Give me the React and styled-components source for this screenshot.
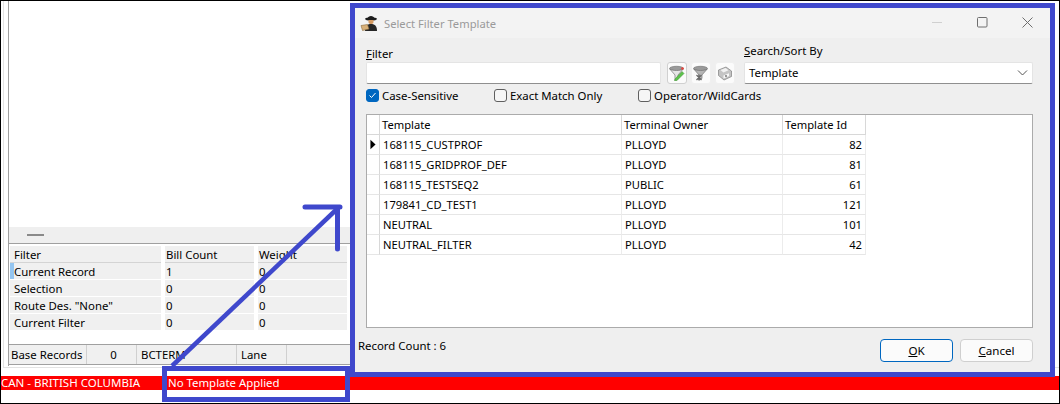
import React from "react";
import styled, { createGlobalStyle } from "styled-components";

const GlobalStyle = createGlobalStyle`
  html, body { margin: 0; padding: 0; background: #fff; }
  body { font-family: "Noto Sans", "Open Sans", sans-serif; font-size: 11.4px; color: #000; }
`;

const Shell = styled.div`
  position: relative;
  width: 1060px;
  height: 404px;
  box-sizing: border-box;
  border: 1px solid #000;
  overflow: hidden;
  background: #fff;
  display: flex;
  flex-direction: column;
`;

const OuterFrame = styled.div`
  margin-left: 2px;
  height: 367px;
  box-sizing: border-box;
  border-left: 1px solid #e3e3e3;
  border-bottom: 1px solid #e3e3e3;
  padding-left: 4px;
`;

const LeftPane = styled.div`
  width: 342px;
  height: 365px;
  border-left: 1px solid #a0a0a0;
  box-sizing: border-box;
  display: flex;
  flex-direction: column;
`;

const ChartArea = styled.div`
  height: 226px;
`;

const Sizer = styled.div`
  height: 17px;
  background: #efefef;
  border-bottom: 1px solid #a0a0a0;
  display: flex;
  align-items: center;
  box-sizing: border-box;
  padding-left: 18px;
  &::before {
    content: "";
    width: 17px;
    height: 2px;
    background: #8a8a8a;
  }
`;

const SummaryGrid = styled.div`
  margin: 2px 0 0 1px;
  display: grid;
  grid-template-columns: 151px 89px 89px;
  column-gap: 4px;
  grid-auto-rows: 17px;
`;

const SummaryCell = styled.div`
  background: #f0f0f0;
  border-bottom: 1px solid ${(p) => (p.$head ? "#d4d4d4" : "#fff")};
  box-sizing: border-box;
  padding-left: ${(p) => (p.$first ? "4px" : "1px")};
  line-height: 17px;
  white-space: nowrap;
  position: relative;
  ${(p) => p.$marked && `box-shadow: inset 4px 0 0 #94c5f0;`}
`;

const StatusBar = styled.div`
  margin-top: 13px;
  height: 21px;
  box-sizing: border-box;
  border-top: 1px solid #a0a0a0;
  border-bottom: 1px solid #a0a0a0;
  background: #f0f0f0;
  display: flex;
`;

const StatusCell = styled.div`
  width: ${(p) => p.$w}px;
  box-sizing: border-box;
  border-right: 1px solid #d0d0d0;
  padding-left: ${(p) => (p.$first ? "2px" : "4px")};
  line-height: 20px;
  text-align: ${(p) => (p.$center ? "center" : "left")};
`;

const RedStrip = styled.div`
  margin-top: 8px;
  height: 14px;
  background: #ff0000;
  color: #fff;
  line-height: 14px;
  display: flex;
  font-size: 11.5px;
`;

const Province = styled.span`
  width: 167px;
`;

const Dialog = styled.div`
  position: absolute;
  left: 349px;
  top: 2px;
  width: 705px;
  height: 374px;
  box-sizing: border-box;
  border: 5px solid #3f48cc;
  background: #efefef;
  display: flex;
  flex-direction: column;
`;

const TitleBar = styled.div`
  height: 30px;
  flex: none;
  background: #f3f3f3;
  display: flex;
  align-items: center;
  padding-left: 5px;
  color: #9a9a9a;
  font-size: 11.2px;
  gap: 5px;
`;

const WindowButtons = styled.div`
  margin-left: auto;
  display: flex;
  align-items: center;
  gap: 34px;
  padding: 0 17px 2px 0;
`;

const FilterRow = styled.div`
  display: flex;
  margin: 5px 0 0 11px;
  height: 42px;
`;

const Field = styled.div`
  display: flex;
  flex-direction: column;
  width: ${(p) => p.$w}px;
  padding-top: ${(p) => p.$top || 0}px;
`;

const FieldLabel = styled.label`
  line-height: 16px;
  height: 16px;
`;

const TextBox = styled.div`
  height: 22px;
  margin-top: ${(p) => p.$gap || 0}px;
  box-sizing: border-box;
  background: #fff;
  border: 1px solid #e4e4e4;
  border-bottom: 1px solid #8f8f8f;
  border-radius: 2px;
  padding-left: 4px;
  line-height: 20px;
  display: flex;
  align-items: center;
  justify-content: space-between;
`;

const Chevron = styled.svg`
  margin-right: 4px;
`;

const ToolGroup = styled.div`
  display: flex;
  gap: 4px;
  margin: 19px 0 0 6px;
  width: 77px;
`;

const ToolButton = styled.div`
  width: 20px;
  height: 22px;
  border-radius: 3px;
  box-sizing: border-box;
  border: 1px solid ${(p) => (p.$active ? "#d0d0d0" : "#f0f0f0")};
  background: #fbfbfb;
  display: flex;
  align-items: center;
  justify-content: center;
`;

const CheckRow = styled.div`
  display: flex;
  height: 20px;
  margin-left: 11px;
  align-items: center;
`;

const CheckItem = styled.div`
  width: ${(p) => p.$w}px;
  display: flex;
  align-items: center;
  gap: 3px;
`;

const Box = styled.span`
  width: 13px;
  height: 13px;
  box-sizing: border-box;
  border-radius: 3px;
  border: 1px solid ${(p) => (p.$on ? "#0067c0" : "#5f5f5f")};
  background: ${(p) => (p.$on ? "#0067c0" : "#f6f6f6")};
  display: flex;
  align-items: center;
  justify-content: center;
`;

const TableFrame = styled.div`
  margin: 9px 0 0 11px;
  width: 667px;
  height: 214px;
  box-sizing: border-box;
  background: #fff;
  border: 1px solid #ababab;
`;

const TableGrid = styled.div`
  display: grid;
  grid-template-columns: 13px 242px 161px 83px;
  width: max-content;
  grid-auto-rows: 20px;
  font-size: 11.2px;
`;

const TableCell = styled.div`
  box-sizing: border-box;
  border-bottom: 1px solid #e6e6e6;
  border-right: 1px solid ${(p) => (p.$head || p.$gutter ? "#d8d8d8" : "#ececec")};
  padding: 0 3px;
  line-height: 20px;
  text-align: ${(p) => (p.$num ? "right" : "left")};
  white-space: nowrap;
  ${(p) => p.$head && `border-bottom-color: #d8d8d8; padding-left: 2px;`}
  display: ${(p) => (p.$gutter ? "flex" : "block")};
  align-items: center;
`;

const Footer = styled.div`
  flex: 1;
  display: flex;
  align-items: flex-start;
  justify-content: space-between;
  padding: 8px 17px 0 3px;
`;

const RecordCount = styled.span`
  margin-top: 2px;
`;

const ButtonRow = styled.div`
  display: flex;
  gap: 7px;
  margin-top: 3px;
`;

const DialogButton = styled.button`
  width: 73px;
  height: 23px;
  box-sizing: border-box;
  font: inherit;
  font-size: 11.6px;
  color: #000;
  border-radius: 4px;
  padding: 0;
  background: #fbfbfb;
  border: 1px solid ${(p) => (p.$primary ? "#0067c0" : "#cfcfcf")};
`;

const Highlight = styled.div`
  position: absolute;
  left: 161px;
  top: 365px;
  width: 188px;
  height: 36px;
  box-sizing: border-box;
  border: 5px solid #3f48cc;
`;

const Arrow = styled.svg`
  position: absolute;
  left: 0;
  top: 0;
  pointer-events: none;
`;

const Template = styled.span`
  position: absolute;
  left: 167px;
  top: 375px;
  width: 176px;
  height: 14px;
  line-height: 14px;
  color: #fff;
  background: #ff0000;
`;

const rows = [
  ["168115_CUSTPROF", "PLLOYD", 82],
  ["168115_GRIDPROF_DEF", "PLLOYD", 81],
  ["168115_TESTSEQ2", "PUBLIC", 61],
  ["179841_CD_TEST1", "PLLOYD", 121],
  ["NEUTRAL", "PLLOYD", 101],
  ["NEUTRAL_FILTER", "PLLOYD", 42],
];

const summary = [
  ["Current Record", "1", "0"],
  ["Selection", "0", "0"],
  ['Route Des. "None"', "0", "0"],
  ["Current Filter", "0", "0"],
];

const Funnel = ({ grey }) => (
  <svg width="16" height="16" viewBox="0 0 16 16">
    <ellipse cx="7.5" cy="3.5" rx="7" ry="2.2" fill="#9a9a9a" stroke="#777" strokeWidth="0.7" />
    <path d="M0.8 4 L6 10 V15 L9 13.5 V10 L14.2 4 C11 6 4 6 0.8 4Z" fill={grey ? "#b5b5b5" : "#e6e6e6"} stroke="#777" strokeWidth="0.7" />
    {grey ? (
      <path d="M3.5 10l5 5M8.5 10l-5 5M6 9.5v6" stroke="#6a6a6a" strokeWidth="1.3" />
    ) : (
      <>
        <path d="M6 14 L13 6.5 L15 8.5 L8 15.5 L5.5 15.8Z" fill="#5cc24a" stroke="#3d8a30" strokeWidth="0.5" />
        <circle cx="13.5" cy="3.5" r="1.3" fill="#e8433a" />
      </>
    )}
  </svg>
);

const Floppy = () => (
  <svg width="16" height="16" viewBox="0 0 16 16">
    <path d="M1.5 5 L9 2 L14.5 6 V11.5 L7 15 L1.5 10.5Z" fill="#c4c4c4" stroke="#808080" strokeWidth="0.7" />
    <path d="M3.5 5 L8.5 3 L11.5 5.2 L6.5 7.5Z" fill="#f2f2f2" />
    <path d="M6.5 10.5 L12 8.3 V11 L6.5 13.4Z" fill="#f7f7f7" />
    <circle cx="9" cy="11" r="0.8" fill="#222" />
  </svg>
);

const AgentIcon = () => (
  <svg width="19" height="18" viewBox="0 0 19 18">
    <ellipse cx="11" cy="5" rx="6" ry="1.6" fill="#1c1c1c" />
    <path d="M7.5 4.5 C8 1 14 1 14.5 4.5Z" fill="#1c1c1c" />
    <path d="M8.5 6 h5 v2.5 c-1 2 -4 2 -5 0Z" fill="#d49a62" />
    <path d="M5 17 C5 11 8 10 11 10 C14 10 17 11 17 17Z" fill="#262626" />
    <path d="M1 11.5 L7.5 10.5 L9 15 L2.5 16.5Z" fill="#d8b078" stroke="#8a6a3c" strokeWidth="0.6" />
  </svg>
);

const App = () => (
  <>
    <GlobalStyle />
    <Shell>
      <OuterFrame>
        <LeftPane>
          <ChartArea />
          <Sizer />
          <SummaryGrid>
            <SummaryCell $head $first>Filter</SummaryCell>
            <SummaryCell $head>Bill Count</SummaryCell>
            <SummaryCell $head>Weight</SummaryCell>
            {summary.map((row, i) => (
              <React.Fragment key={row[0]}>
                <SummaryCell $first $marked={i === 0}>{row[0]}</SummaryCell>
                <SummaryCell>{row[1]}</SummaryCell>
                <SummaryCell>{row[2]}</SummaryCell>
              </React.Fragment>
            ))}
          </SummaryGrid>
          <StatusBar>
            <StatusCell $w={78} $first>Base Records</StatusCell>
            <StatusCell $w={50} $center>0</StatusCell>
            <StatusCell $w={100}>BCTERM</StatusCell>
            <StatusCell $w={50}>Lane</StatusCell>
          </StatusBar>
        </LeftPane>
      </OuterFrame>
      <RedStrip>
        <Province>CAN - BRITISH COLUMBIA</Province>
      </RedStrip>
      <Template>No Template Applied</Template>

      <Dialog>
        <TitleBar>
          <AgentIcon />
          Select Filter Template
          <WindowButtons>
            <svg width="11" height="11" viewBox="0 0 11 11"><path d="M0 5.5h10" stroke="#d0d0d0" /></svg>
            <svg width="11" height="11" viewBox="0 0 11 11"><rect x="0.5" y="0.5" width="9.5" height="9.5" rx="1" fill="none" stroke="#6e6e6e" /></svg>
            <svg width="11" height="11" viewBox="0 0 11 11"><path d="M0.5 0.5l10 10M10.5 0.5l-10 10" stroke="#6e6e6e" /></svg>
          </WindowButtons>
        </TitleBar>
        <FilterRow>
          <Field $w={295} $top={3}>
            <FieldLabel><u>F</u>ilter</FieldLabel>
            <TextBox />
          </Field>
          <ToolGroup>
            <ToolButton $active><Funnel /></ToolButton>
            <ToolButton><Funnel grey /></ToolButton>
            <ToolButton><Floppy /></ToolButton>
          </ToolGroup>
          <Field $w={289}>
            <FieldLabel><u>S</u>earch/Sort By</FieldLabel>
            <TextBox $gap={3}>
              Template
              <Chevron width="11" height="6" viewBox="0 0 11 6">
                <path d="M1 0.5l4.5 4.5 4.5-4.5" fill="none" stroke="#555" />
              </Chevron>
            </TextBox>
          </Field>
        </FilterRow>
        <CheckRow>
          <CheckItem $w={128}>
            <Box $on>
              <svg width="9" height="9" viewBox="0 0 9 9"><path d="M1.5 4.5l2 2 4-4.5" fill="none" stroke="#fff" /></svg>
            </Box>
            Case-Sensitive
          </CheckItem>
          <CheckItem $w={144}><Box />Exact Match Only</CheckItem>
          <CheckItem $w={140}><Box />Operator/WildCards</CheckItem>
        </CheckRow>
        <TableFrame>
          <TableGrid>
            <TableCell $head $gutter />
            <TableCell $head>Template</TableCell>
            <TableCell $head>Terminal Owner</TableCell>
            <TableCell $head>Template Id</TableCell>
            {rows.map((row, i) => (
              <React.Fragment key={row[0]}>
                <TableCell $gutter>
                  {i === 0 && (
                    <svg width="7" height="11" viewBox="0 0 7 11"><path d="M0.5 0 L6.5 5.5 L0.5 11Z" fill="#000" /></svg>
                  )}
                </TableCell>
                <TableCell>{row[0]}</TableCell>
                <TableCell>{row[1]}</TableCell>
                <TableCell $num>{row[2]}</TableCell>
              </React.Fragment>
            ))}
          </TableGrid>
        </TableFrame>
        <Footer>
          <RecordCount>Record Count : 6</RecordCount>
          <ButtonRow>
            <DialogButton $primary><u>O</u>K</DialogButton>
            <DialogButton><u>C</u>ancel</DialogButton>
          </ButtonRow>
        </Footer>
      </Dialog>

      <Highlight />
      <Arrow width="1058" height="402" viewBox="0 0 1058 402">
        <path d="M171 365 L336 208" fill="none" stroke="#3f48cc" strokeWidth="4.5" />
        <path d="M304 206 H339 M336.5 206 V248" fill="none" stroke="#3f48cc" strokeWidth="5" strokeLinecap="round" />
      </Arrow>
    </Shell>
  </>
);

export default App;
